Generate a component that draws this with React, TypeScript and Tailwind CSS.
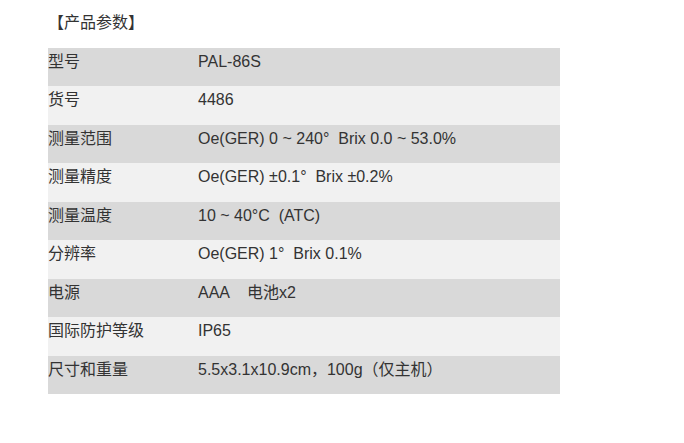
const rows: [string, string][] = [
  ["型号", "PAL-86S"],
  ["货号", "4486"],
  ["测量范围", "Oe(GER) 0 ~ 240°  Brix 0.0 ~ 53.0%"],
  ["测量精度", "Oe(GER) ±0.1°  Brix ±0.2%"],
  ["测量温度", "10 ~ 40°C  (ATC)"],
  ["分辨率", "Oe(GER) 1°  Brix 0.1%"],
  ["电源", "AAA    电池x2"],
  ["国际防护等级", "IP65"],
  ["尺寸和重量", "5.5x3.1x10.9cm，100g（仅主机）"],
];

export default function App() {
  return (
    <div
      className="w-[684px] h-[443px] bg-white pl-[48px] pt-[10px] text-[#333] text-[16px] leading-[24px]"
      style={{ fontFamily: '"Liberation Sans", Arial, "Noto Sans CJK SC", sans-serif' }}
    >
      <div className="h-[38px] pt-[1px] whitespace-pre">【产品参数】</div>
      <div className="w-[512px] flex flex-col">
        {rows.map(([k, v], i) => (
          <div
            key={k}
            className={`flex pt-[2px] whitespace-pre ${i % 2 === 0 ? "bg-[#d9d9d9] h-[38px]" : "bg-[#f1f1f1] h-[39px]"}`}
          >
            <div className="w-[150px]">{k}</div>
            <div className="flex-1">{v}</div>
          </div>
        ))}
      </div>
    </div>
  );
}
